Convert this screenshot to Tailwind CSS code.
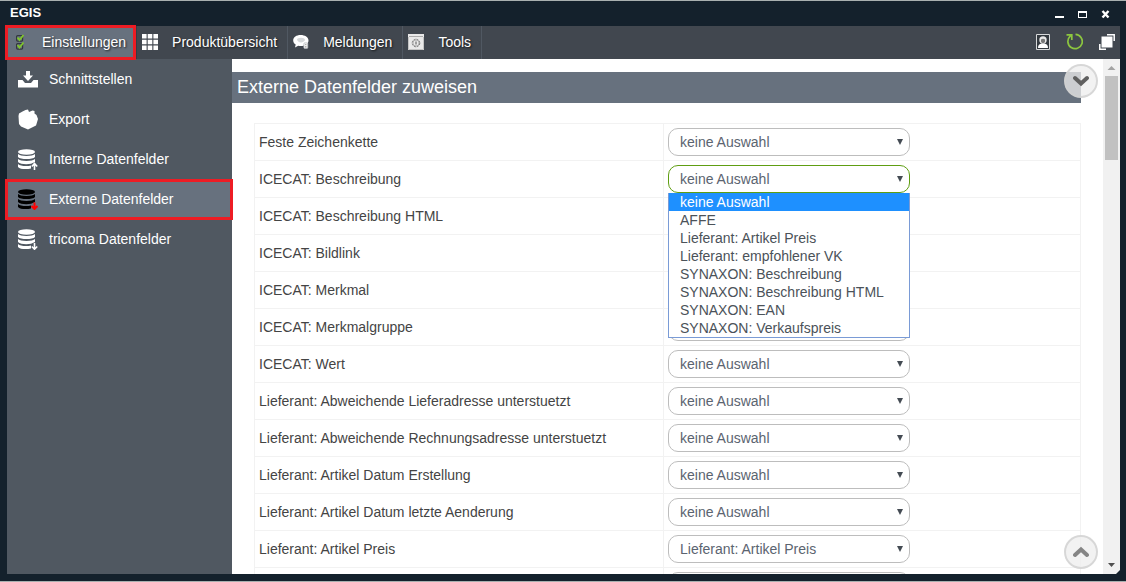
<!DOCTYPE html>
<html lang="de">
<head>
    <meta charset="UTF-8">
    <meta name="viewport" content="width=device-width, initial-scale=1.0">
    <title>EGIS</title>
    <script src="https://cdn.jsdelivr.net/npm/@tailwindcss/browser@4"></script>
</head>
<body class="h-screen overflow-hidden bg-[#a9b0b0] py-px font-['Liberation_Sans',Arial,sans-serif] text-sm text-[#444]">
    <div class="flex h-full flex-col bg-[#14212c] pr-1.5 pb-[7px] pl-[7px]">
        <!-- Title bar -->
        <header class="flex h-[25px] shrink-0 items-center justify-between pr-2.5 pl-[3px] text-white">
            <h1 class="text-[13px] font-bold">EGIS</h1>
            <div class="flex items-center gap-3.5">
                <button aria-label="Minimieren"><svg class="h-2.5 w-[9px]" viewBox="0 0 9 10"><path d="M0 7h9v2H0z" fill="#fff"/></svg></button>
                <button aria-label="Maximieren"><svg class="h-2.5 w-[9px]" viewBox="0 0 9 10"><path d="M0 2h9v7H0zM1 4v4h7V4z" fill="#fff" fill-rule="evenodd"/></svg></button>
                <button aria-label="Schließen"><svg class="h-2.5 w-[9px]" viewBox="0 0 9 10"><path d="M1.500 2l6 6.500M7.500 2l-6 6.500" stroke="#fff" stroke-width="2.400"/></svg></button>
            </div>
        </header>

        <!-- Menu bar -->
        <nav class="flex h-[33px] shrink-0 bg-[#41474f] text-white text-shadow-[1px_1px_2px_#000000b3]">
            <a href="#einstellungen" class="relative flex items-center gap-3.5 border-r border-[#353b43] bg-[#67717e] pr-2.5 pb-0.5 pl-[5px]">
                <svg class="h-4 w-4" viewBox="0 0 16 16">
                    <g fill="none" stroke="#33383e" stroke-width="1.200"><rect x="4.600" y="1.600" width="6" height="5.500" rx="1"/><rect x="4.600" y="9.600" width="6" height="5.500" rx="1"/></g>
                    <path d="M5.500 3.500l2 2.500 4-5M5.500 11l2 2.500 4-5" fill="none" stroke="#7fc62c" stroke-width="1.800"/>
                </svg>
                Einstellungen
                <span class="pointer-events-none absolute -inset-y-px right-0 -left-0.5 z-10 border-3 border-[#ed1c24]"></span>
            </a>
            <a href="#produkte" class="flex items-center gap-3.5 border-r border-[#505862] pr-2.5 pb-0.5 pl-[5px]">
                <svg class="h-4 w-4" viewBox="0 0 16 16" fill="#fff"><path d="M0 0h4.600v4.600H0zM5.700 0h4.600v4.600H5.700zM11.400 0H16v4.600h-4.600zM0 5.700h4.600v4.600H0zM5.700 5.700h4.600v4.600H5.700zM11.400 5.700H16v4.600h-4.600zM0 11.400h4.600V16H0zM5.700 11.400h4.600V16H5.700zM11.400 11.400H16V16h-4.600z"/></svg>
                Produktübersicht
            </a>
            <a href="#meldungen" class="flex items-center gap-3.5 border-r border-[#505862] pr-2.5 pb-0.5 pl-[5px]">
                <svg class="h-4 w-4" viewBox="0 0 16 16">
                    <path d="M7.500 1C12 1 15.500 3.200 15.500 6.500S12 12 8 12c-1 0-2 0-2.800-.3L2 13.500l.7-3C1 9.500.2 8 .2 6.500.2 3.200 3.500 1 7.500 1z" fill="#fff"/>
                    <path d="M4 5.500c0-1 2-1.700 4-1.700s4 .7 4 2-2 2.700-4 2.700-4-1.500-4-3z" fill="#d5d8da"/>
                    <rect x="10.800" y="8.800" width="4" height="5.700" rx="1" fill="#eee" stroke="#b5b9bd" stroke-width=".6"/>
                    <path d="M12.800 10v1M12.800 12v1.500" stroke="#999"/>
                </svg>
                Meldungen
            </a>
            <a href="#tools" class="flex items-center gap-3.5 border-r border-[#505862] pr-2.5 pb-0.5 pl-[5px]">
                <svg class="h-4 w-4" viewBox="0 0 16 16">
                    <path d="M0 0h16v16H0z" fill="#e9e9e9"/><path d="M1 2.500h14" stroke="#aaa"/><path d="M.5 3v12.500h15V3" fill="none" stroke="#c4c4c4"/>
                    <circle cx="8" cy="9" r="3.800" fill="none" stroke="#777" stroke-dasharray="2 1"/><circle cx="8" cy="9" r="3" fill="none" stroke="#999" stroke-width=".7"/><path d="M8 7.500v3" stroke="#555"/>
                </svg>
                Tools
            </a>
            <div class="ml-auto flex items-center gap-4 pr-[5px] pb-0.5">
                <button aria-label="Benutzer">
                    <svg class="h-4 w-3.5" viewBox="0 0 14 16">
                        <path d="M.5.5h13v15H.5z" fill="#33393f" stroke="#d6d8da"/>
                        <path d="M2 14c0-3 1.500-4 3.500-4.500h3C10.500 10 12 11 12 14z" fill="#fff"/>
                        <circle cx="7" cy="6" r="3.700" fill="#e8e8e8"/><path d="M5 5.500c1-1 3-1 4 0v2c-.5 2-3.500 2-4 0z" fill="#777"/>
                    </svg>
                </button>
                <button aria-label="Neu laden">
                    <svg class="h-[17px] w-[17px]" viewBox="0 0 17 17" fill="none" stroke="#8cc63f" stroke-width="1.700"><path d="M9.500 1.300A7.200 7.200 0 1 1 4.200 3.200M0.500 1.800h5.300v5.200M5.500 2L3 4.500"/></svg>
                </button>
                <button aria-label="Fenster">
                    <svg class="h-4 w-4" viewBox="0 0 16 16"><path d="M8 .8h7.200V7M.8 10v5.200H7" fill="none" stroke="#fff" stroke-width="1.500"/><path d="M2.500 2.500h11v11h-11z" fill="#fff"/></svg>
                </button>
            </div>
        </nav>

        <div class="flex min-h-0 flex-1">
            <!-- Sidebar -->
            <aside class="w-[225px] shrink-0 bg-[#505861] text-white">
                <a href="#schnittstellen" class="flex h-10 items-center gap-2.5 pl-2.5">
                    <svg class="h-[22px] w-[22px]" viewBox="0 0 22 22" fill="#fff"><path d="M9 3h4v4.500h3L11 13 6 7.500h3z"/><path d="M1 12h4.500l2.500 3h6l2.500-3H21v7.500H1z"/></svg>
                    Schnittstellen
                </a>
                <a href="#export" class="flex h-10 items-center gap-2.5 pl-2.5">
                    <svg class="h-[22px] w-[22px]" viewBox="0 0 22 22" fill="#fff"><path d="M2 5.500l3.500-2 3-1.500 2.500-.5 1 2.500 3.500-1.500 2 .5v2.500l2 1.500 1.500 4-1.500 5-.5 1.500L11 21.500 4 18.500 2 16 1.500 8z"/></svg>
                    Export
                </a>
                <a href="#intern" class="flex h-10 items-center gap-2.5 pl-2.5">
                    <svg class="h-[22px] w-[22px]" viewBox="0 0 22 22" fill="#fff">
                        <ellipse cx="9.500" cy="4" rx="8.500" ry="2.700"/><path d="M1 6c2 2.500 15 2.500 17 0v3c-2 2.800-15 2.800-17 0zM1 11c2 2.500 15 2.500 17 0v3l-4 1.700c-4 .8-11 .6-13-1.700zM1 16c2 2.200 9 2.500 13 1.500v3c-4 1-11 1-13-1.500z"/>
                        <path d="M17.500 22v-6M14.800 18.500l2.700-3 2.700 3" fill="none" stroke="#fff" stroke-width="1.600"/>
                    </svg>
                    Interne Datenfelder
                </a>
                <a href="#extern" class="relative flex h-10 items-center gap-2.5 bg-[#67717e] pl-2.5">
                    <svg class="h-[22px] w-[22px]" viewBox="0 0 22 22" fill="#000">
                        <ellipse cx="9.500" cy="4" rx="8.500" ry="2.700"/><path d="M1 6c2 2.500 15 2.500 17 0v3c-2 2.800-15 2.800-17 0zM1 11c2 2.500 15 2.500 17 0v3l-4 1.700c-4 .8-11 .6-13-1.700zM1 16c2 2.200 9 2.500 13 1.500v3c-4 1-11 1-13-1.500z"/>
                        <path d="M17.500 14.500v6M14.500 18l3 3 3-3" fill="none" stroke="#f00" stroke-width="2"/>
                    </svg>
                    Externe Datenfelder
                    <span class="pointer-events-none absolute top-0 -right-px -bottom-px -left-0.5 z-10 border-3 border-[#ed1c24]"></span>
                </a>
                <a href="#tricoma" class="flex h-10 items-center gap-2.5 pl-2.5">
                    <svg class="h-[22px] w-[22px]" viewBox="0 0 22 22" fill="#fff">
                        <ellipse cx="9.500" cy="4" rx="8.500" ry="2.700"/><path d="M1 6c2 2.500 15 2.500 17 0v3c-2 2.800-15 2.800-17 0zM1 11c2 2.500 15 2.500 17 0v3l-4 1.700c-4 .8-11 .6-13-1.700zM1 16c2 2.200 9 2.500 13 1.500v3c-4 1-11 1-13-1.500z"/>
                        <path d="M17.500 15v6M14.800 18.500l2.700 2.700 2.700-2.700" fill="none" stroke="#fff" stroke-width="1.600"/>
                    </svg>
                    tricoma Datenfelder
                </a>
            </aside>

            <!-- Main Content -->
            <main class="relative min-w-0 flex-1 overflow-hidden bg-white pt-[13px] pr-[22px]">
                <h2 class="bg-[#67717e] px-[5px] text-lg leading-[31px] text-white">Externe Datenfelder zuweisen</h2>
                <div class="mt-5 pl-[22px]">
                    <table class="w-full table-fixed border-collapse">
                        <colgroup><col class="w-[409px]"><col></colgroup>
                        <tbody id="fieldRows"></tbody>
                    </table>
                </div>
                <button aria-label="Nach unten" class="absolute top-[5px] right-[5px] flex size-[34px] items-center justify-center rounded-full border-2 border-[#cfcfcf]/80 bg-[#eee]/75">
                    <svg class="h-3 w-4" viewBox="0 0 16 12"><path d="M2 3l6 5.500L14 3" fill="none" stroke="#606060" stroke-width="4" stroke-linecap="round"/></svg>
                </button>
                <button aria-label="Nach oben" class="absolute right-[5px] bottom-[5px] flex size-[34px] items-center justify-center rounded-full border-2 border-[#cfcfcf]/80 bg-[#eee]/75">
                    <svg class="h-3 w-4" viewBox="0 0 16 12"><path d="M2 9l6-5.500L14 9" fill="none" stroke="#858585" stroke-width="4" stroke-linecap="round"/></svg>
                </button>
            </main>

            <!-- Scrollbar -->
            <div class="flex w-[17px] shrink-0 flex-col items-center bg-[#f1f1f1]">
                <svg class="h-[17px] w-[17px]" viewBox="0 0 17 17"><path d="M4.500 11l4-4 4 4z" fill="#a3a3a3"/></svg>
                <div class="h-[84px] w-[13px] bg-[#c1c1c1]"></div>
                <svg class="mt-auto h-[17px] w-[17px]" viewBox="0 0 17 17"><path d="M5 6h7L8.500 10z" fill="#505050"/><path d="M13 17l4-4v4z" fill="#14212c"/></svg>
            </div>
        </div>
    </div>

    <script>
        const options = [
            'keine Auswahl',
            'AFFE',
            'Lieferant: Artikel Preis',
            'Lieferant: empfohlener VK',
            'SYNAXON: Beschreibung',
            'SYNAXON: Beschreibung HTML',
            'SYNAXON: EAN',
            'SYNAXON: Verkaufspreis'
        ];

        const fields = [
            { name: 'Feste Zeichenkette' },
            { name: 'ICECAT: Beschreibung', open: true },
            { name: 'ICECAT: Beschreibung HTML' },
            { name: 'ICECAT: Bildlink' },
            { name: 'ICECAT: Merkmal' },
            { name: 'ICECAT: Merkmalgruppe' },
            { name: 'ICECAT: Wert' },
            { name: 'Lieferant: Abweichende Lieferadresse unterstuetzt' },
            { name: 'Lieferant: Abweichende Rechnungsadresse unterstuetzt' },
            { name: 'Lieferant: Artikel Datum Erstellung' },
            { name: 'Lieferant: Artikel Datum letzte Aenderung' },
            { name: 'Lieferant: Artikel Preis', value: 'Lieferant: Artikel Preis' },
            { name: '' }
        ];

        // Option list below the opened select
        function renderList() {
            return `
                <ul class="absolute top-7 left-0 z-20 w-full border border-t-0 border-[#7a9bd6] bg-white leading-[18px] text-[#4b5259]" role="listbox">
                    ${options.map((o, i) => `<li role="option" class="${i === 0 ? 'bg-[#1e90ff] text-white' : ''} pl-[11px]">${o}</li>`).join('')}
                </ul>`;
        }

        document.getElementById('fieldRows').innerHTML = fields.map((f, i) => `
            <tr class="h-[37px]">
                <td class="border border-[#f2f2f2] p-0 pl-1"><label for="field${i}">${f.name}</label></td>
                <td class="border border-[#f2f2f2] p-0 pl-1">
                    <div class="relative w-[242px]">
                        <select id="field${i}" class="${f.open ? 'border-[#5f9e12]' : 'border-[#bdbdbd]'} block h-7 w-full appearance-none rounded-[10px] border bg-white pl-[11px] text-[#5b6470] outline-none">
                            ${options.map(o => `<option ${o === f.value ? 'selected' : ''}>${o}</option>`).join('')}
                        </select>
                        <svg class="pointer-events-none absolute top-[11px] right-[7px] h-1.5 w-1.5" viewBox="0 0 6 6"><path d="M0 0h6L3 6z" fill="#444b53"/></svg>
                        ${f.open ? renderList() : ''}
                    </div>
                </td>
            </tr>
        `).join('');
    </script>
</body>
</html>
